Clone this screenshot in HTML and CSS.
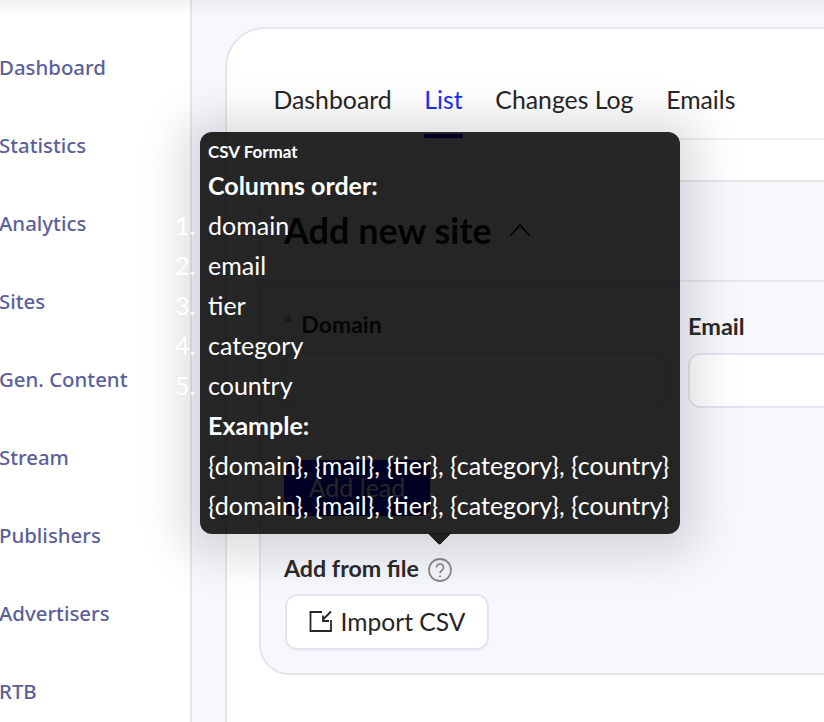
FILE: index.html
```html
<!DOCTYPE html>
<html lang="en">
<head>
<meta charset="utf-8">
<title>Sites</title>
<link rel="stylesheet" href="styles.css">
</head>
<body>
<div class="page">
  <nav class="sidebar">
    <a class="nav-item">Dashboard</a>
    <a class="nav-item">Statistics</a>
    <a class="nav-item">Analytics</a>
    <a class="nav-item">Sites</a>
    <a class="nav-item">Gen. Content</a>
    <a class="nav-item">Stream</a>
    <a class="nav-item">Publishers</a>
    <a class="nav-item">Advertisers</a>
    <a class="nav-item">RTB</a>
  </nav>
  <main class="main">
    <div class="card">
      <div class="tabs">
        <span class="tab">Dashboard</span>
        <span class="tab tab-active">List</span>
        <span class="tab">Changes Log</span>
        <span class="tab">Emails</span>
      </div>
      <section class="panel">
        <header class="panel-head">
          <h2 class="panel-title">Add new site</h2>
          <svg class="chevron" width="22" height="14" viewBox="0 0 22 14"><path d="M1.500 12.500 11 2l9.500 10.500" fill="none" stroke="#111" stroke-width="1.700"/></svg>
        </header>
        <div class="panel-body">
          <div class="fields">
            <div class="field field-domain">
              <label class="label label-domain"><span class="req">*</span> Domain</label>
              <div class="input"></div>
            </div>
            <div class="field field-email">
              <label class="label label-email">Email</label>
              <div class="input"></div>
            </div>
          </div>
          <button class="btn-primary">Add lead</button>
          <div class="file-row">
            <span class="label">Add from file</span>
            <svg class="help" width="24" height="24" viewBox="0 0 24 24"><circle cx="12" cy="12" r="11" fill="none" stroke="#8c8c8c" stroke-width="1.800"/><path d="M8.500 9.500a3.500 3.500 0 1 1 5.500 2.800c-1.300.9-2 1.500-2 3" fill="none" stroke="#8c8c8c" stroke-width="1.700"/><circle cx="12" cy="18.300" r="1.100" fill="#8c8c8c"/></svg>
          </div>
          <button class="btn-import">
            <svg width="24" height="24" viewBox="0 0 24 24"><path d="M13 3H1.500V22H22V11M22 2.500 14 10.500M14 6.500V12H20" fill="none" stroke="#262626" stroke-width="1.800"/></svg>
            Import CSV
          </button>
        </div>
      </section>
    </div>
  </main>
</div>
<div class="tooltip">
  <div class="tip-title">CSV Format</div>
  <div class="tip-strong">Columns order:</div>
  <ol class="tip-list">
    <li>domain</li>
    <li>email</li>
    <li>tier</li>
    <li>category</li>
    <li>country</li>
  </ol>
  <div class="tip-strong">Example:</div>
  <div class="tip-line">{domain}, {mail}, {tier}, {category}, {country}</div>
  <div class="tip-line">{domain}, {mail}, {tier}, {category}, {country}</div>
  <span class="tip-arrow"></span>
</div>
</body>
</html>
```

FILE: styles.css
```css
* { box-sizing: border-box; }
html, body { margin: 0; height: 100%; overflow: hidden; }
body { font-family: "Lato", "Noto Sans", sans-serif; background: #f7f8fd; color: #262626; position: relative; }
body::before { content: ""; position: absolute; left: 0; right: 0; top: 0; height: 16px; background: linear-gradient(rgba(0, 0, 0, .05), rgba(0, 0, 0, 0)); }
.page { display: flex; height: 722px; width: 824px; overflow: hidden; }
.sidebar { flex: 0 0 192px; background: #fff; border-right: 2px solid #e3e6ef; padding-top: 48px; display: flex; flex-direction: column; }
.nav-item { flex: none; height: 78px; margin-left: -1px; font: 500 20.400px/38px "Noto Sans", sans-serif; color: #5a5f9b; white-space: nowrap; }
.main { flex: 1; padding: 27px 0 0 33px; min-width: 0; }
.card { width: 760px; height: 800px; background: #fff; border: 2px solid #e3e6ef; border-radius: 40px; padding: 49px 0 0 32px; }
.tabs { display: flex; gap: 32.700px; height: 62px; border-bottom: 2px solid #efefef; padding-left: 14.500px; }
.tab { font-size: 24.800px; line-height: 43px; height: 60px; position: relative; white-space: nowrap; }
.tab-active { color: #1a2ff0; }
.tab-active::after { content: ""; position: absolute; left: 0; right: 0; bottom: 0; height: 4px; background: #0000ff; }
.panel { margin-top: 40px; height: 495px; background: #f7f8fd; border: 2px solid #e6e6ea; border-radius: 30px; }
.panel-head { height: 100px; border-bottom: 2px solid #e8e8ec; padding: 0 0 2px 23px; display: flex; align-items: center; gap: 17px; }
.panel-title { margin: 0; font-size: 36px; font-weight: 700; color: #1a1a1a; }
.panel-body { padding: 28px 0 0 23px; }
.fields { display: flex; gap: 21px; }
.field { flex: none; }
.field-domain { width: 383px; }
.field-email { width: 300px; }
.label { font-size: 23.200px; font-weight: 700; line-height: 30px; color: #2b2b2b; }
.label-domain { display: block; font-size: 23px; margin: -1px 0 1px; }
.label-email { display: block; font-size: 23.500px; margin: 1px 0 -1px; }
.req { color: #ff4d4f; font-weight: 400; margin-right: 2px; }
.input { height: 55px; margin-top: 13px; background: #fff; border: 2px solid #e3e6ef; border-radius: 12px; }
.btn-primary { display: block; margin-top: 52px; width: 146px; height: 56px; padding: 0 0 2px; border: 0; border-radius: 8px; background: #0000e6; color: #fff; font: 25px "Lato", sans-serif; }
.file-row { display: flex; align-items: center; gap: 9px; margin-top: 37px; height: 30px; }
.help { margin-top: 3px; }
.btn-import { display: flex; align-items: center; justify-content: center; gap: 8px; margin-top: 11px; margin-left: 1px; width: 204px; height: 56px; padding: 0 0 2px; background: #fff; border: 2px solid #e3e6ef; border-radius: 12px; color: #262626; font: 24.600px "Lato", sans-serif; box-shadow: 0 2px 0 rgba(0, 0, 0, .02); }
.tooltip { position: absolute; left: 200px; top: 132px; width: 480px; height: 402px; padding: 9px 8px 8px; border-radius: 12px; background: rgba(0, 0, 0, .85); color: #fff; font-size: 25px; line-height: 40px; box-shadow: 0 4px 44px 20px rgba(0, 0, 0, .13); }
.tip-title { font-size: 17px; font-weight: 700; line-height: 22px; margin-bottom: 2px; }
.tip-strong { font-weight: 700; }
.tip-list { margin: 0; padding: 0; list-style: none; counter-reset: tip; }
.tip-list li { position: relative; counter-increment: tip; }
.tip-list li::before { content: counter(tip) "."; position: absolute; left: -33px; top: 0; }
.tip-line { white-space: nowrap; }
.tip-arrow { position: absolute; left: 231px; top: 393px; width: 17px; height: 17px; transform: rotate(45deg); background: rgba(0, 0, 0, .85); border-bottom-right-radius: 3px; clip-path: polygon(100% 0, 100% 100%, 0 100%); }
```
